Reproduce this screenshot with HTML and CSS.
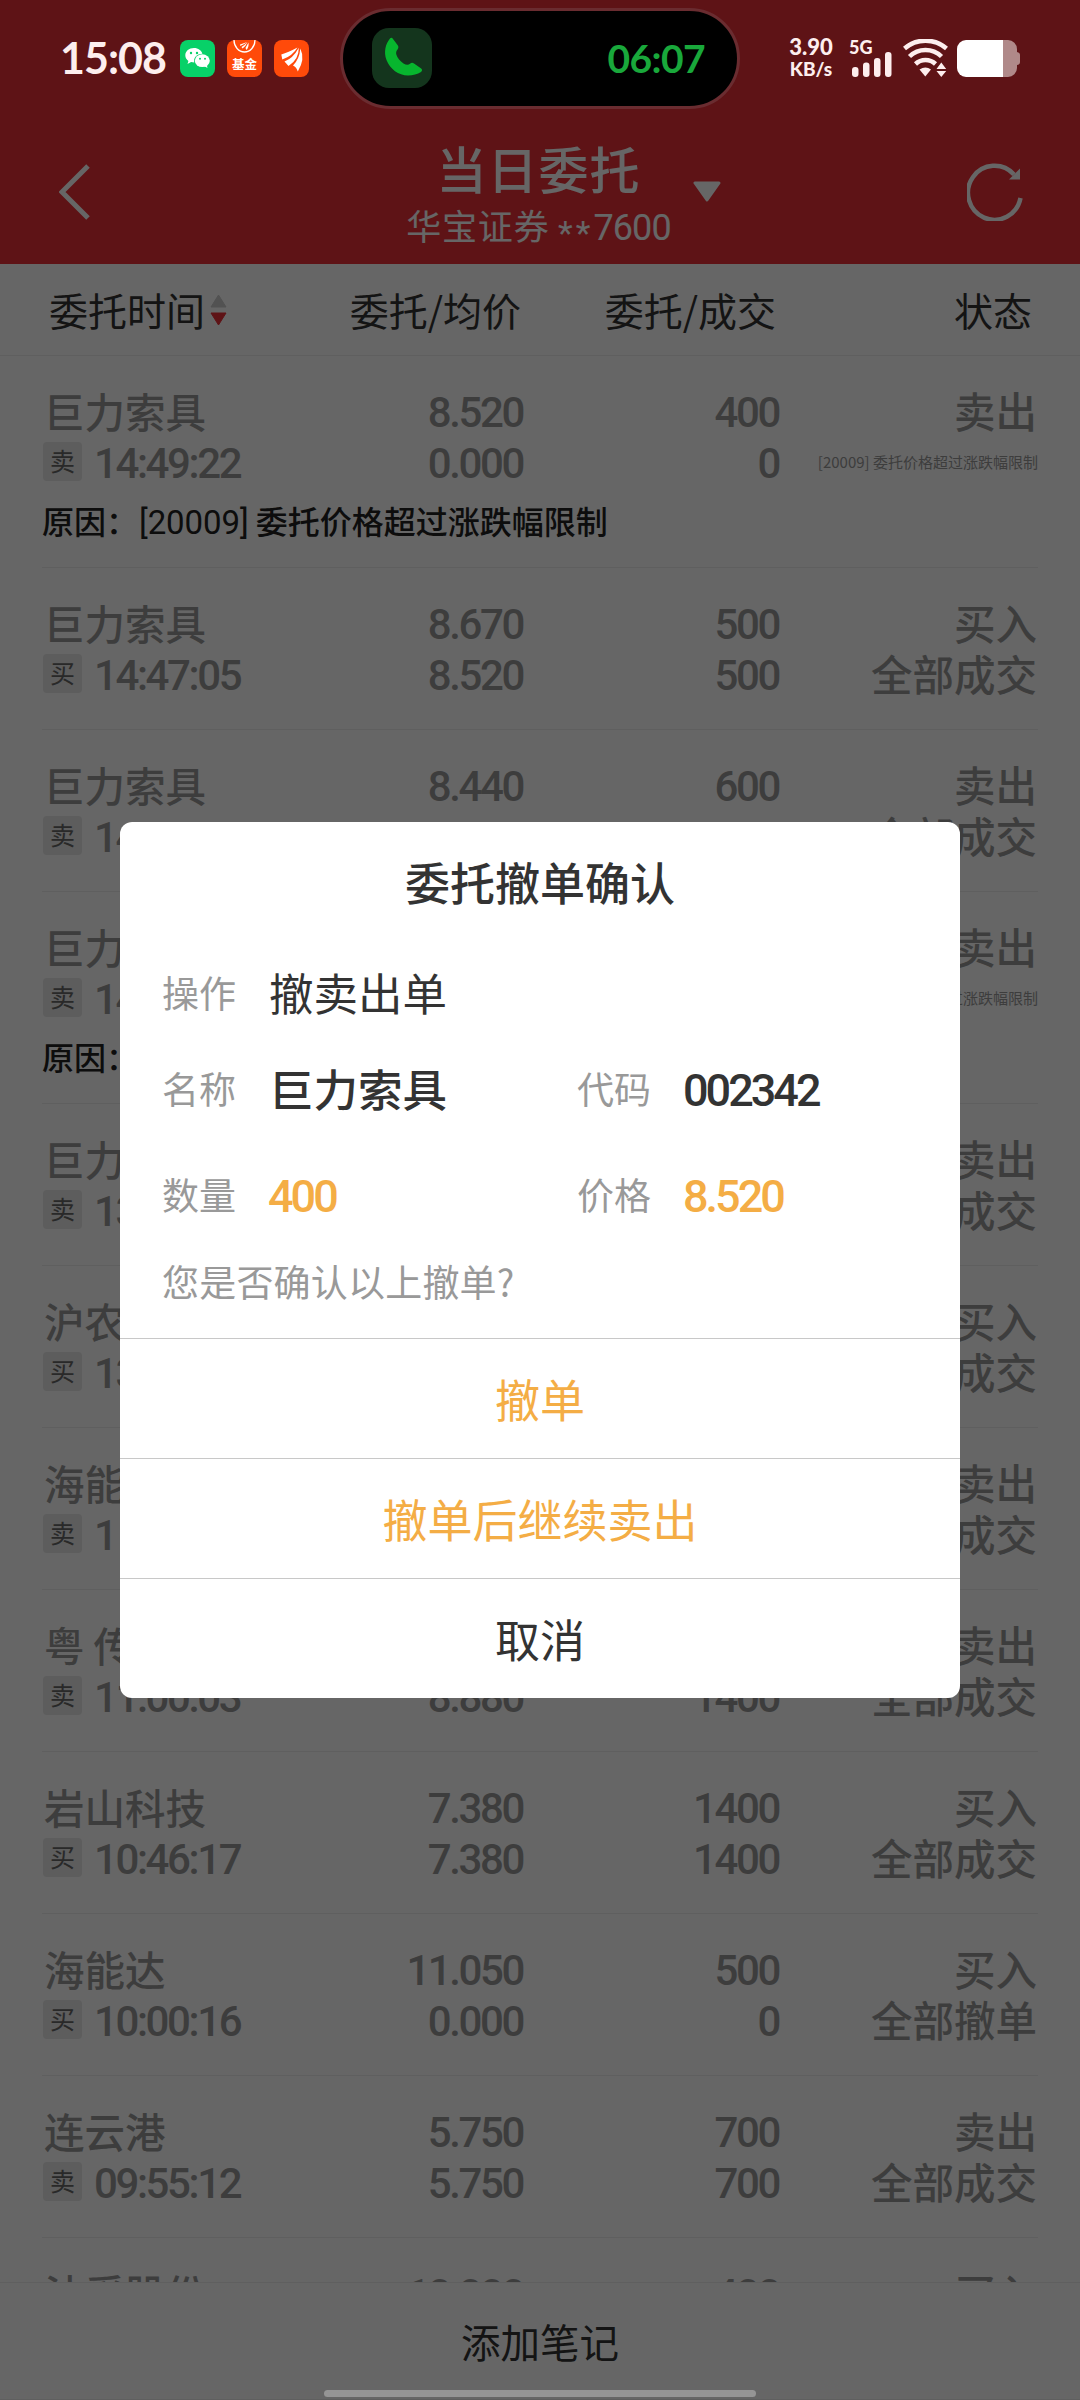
FILE: index.html
```html
<!DOCTYPE html>
<html lang="zh-CN">
<head>
<meta charset="utf-8">
<title>当日委托</title>
<link rel="stylesheet" href="styles.css">
</head>
<body>
<div class="screen">
  <div class="page">
    <header class="nav">
      <svg class="nav-back" width="32" height="58" viewBox="0 0 32 58"><path d="M29 3 3 29 29 55" fill="none" stroke="#fff" stroke-width="5"/></svg>
      <div class="nav-center">
        <h1 class="nav-title">当日委托</h1>
        <div class="nav-account">华宝证券 <span class="num"><span class="mask">**</span>7600</span></div>
      </div>
      <svg class="nav-caret" width="28" height="22" viewBox="0 0 28 22"><path d="M2 2H26L14 19Z" fill="#fff" stroke="#fff" stroke-width="3" stroke-linejoin="round"/></svg>
      <svg class="nav-refresh" width="58" height="60" viewBox="0 0 58 60"><path d="M47 13.500A26.500 27 0 1 0 53.500 37" fill="none" stroke="#fff" stroke-width="4.500"/><path d="M42 18.500 53 7.500V18.500Z" fill="#fff"/></svg>
    </header>

    <div class="thead grid">
      <div class="th th-time">委托时间<svg width="17" height="32" viewBox="0 0 17 32"><path d="M8.500 1 16 13H1Z" fill="#ccc" stroke="#ccc" stroke-linejoin="round"/><path d="M8.500 31 16 19H1Z" fill="#eb3039" stroke="#eb3039" stroke-linejoin="round"/></svg></div>
      <div class="th">委托/均价</div>
      <div class="th">委托/成交</div>
      <div class="th th-state">状态</div>
    </div>

    <main class="list">
      <section class="row row-reason">
        <div class="grid">
          <div class="name">巨力索具</div><div class="num">8.520</div><div class="num">400</div><div class="state">卖出</div>
          <div class="time"><span class="tag">卖</span><span class="num">14:49:22</span></div><div class="num">0.000</div><div class="num">0</div><div class="state-small">[20009] 委托价格超过涨跌幅限制</div>
        </div>
        <p class="reason">原因：<span class="code">[20009]</span> 委托价格超过涨跌幅限制</p>
      </section>
      <section class="row"><div class="grid">
        <div class="name">巨力索具</div><div class="num">8.670</div><div class="num">500</div><div class="state">买入</div>
        <div class="time"><span class="tag">买</span><span class="num">14:47:05</span></div><div class="num">8.520</div><div class="num">500</div><div class="state">全部成交</div>
      </div></section>
      <section class="row"><div class="grid">
        <div class="name">巨力索具</div><div class="num">8.440</div><div class="num">600</div><div class="state">卖出</div>
        <div class="time"><span class="tag">卖</span><span class="num">14</span></div><div></div><div></div><div class="state">全部成交</div>
      </div></section>
      <section class="row row-reason">
        <div class="grid">
          <div class="name">巨力</div><div></div><div></div><div class="state">卖出</div>
          <div class="time"><span class="tag">卖</span><span class="num">14</span></div><div></div><div></div><div class="state-small">过涨跌幅限制</div>
        </div>
        <p class="reason">原因：</p>
      </section>
      <section class="row"><div class="grid">
        <div class="name">巨力</div><div></div><div></div><div class="state">卖出</div>
        <div class="time"><span class="tag">卖</span><span class="num">13</span></div><div></div><div></div><div class="state">成交</div>
      </div></section>
      <section class="row"><div class="grid">
        <div class="name">沪农</div><div></div><div></div><div class="state">买入</div>
        <div class="time"><span class="tag">买</span><span class="num">13</span></div><div></div><div></div><div class="state">成交</div>
      </div></section>
      <section class="row"><div class="grid">
        <div class="name">海能</div><div></div><div></div><div class="state">卖出</div>
        <div class="time"><span class="tag">卖</span><span class="num">1</span></div><div></div><div></div><div class="state">成交</div>
      </div></section>
      <section class="row"><div class="grid">
        <div class="name">粤 传</div><div></div><div></div><div class="state">卖出</div>
        <div class="time"><span class="tag">卖</span><span class="num">11:00:03</span></div><div class="num">8.880</div><div class="num">1400</div><div class="state">全部成交</div>
      </div></section>
      <section class="row"><div class="grid">
        <div class="name">岩山科技</div><div class="num">7.380</div><div class="num">1400</div><div class="state">买入</div>
        <div class="time"><span class="tag">买</span><span class="num">10:46:17</span></div><div class="num">7.380</div><div class="num">1400</div><div class="state">全部成交</div>
      </div></section>
      <section class="row"><div class="grid">
        <div class="name">海能达</div><div class="num">11.050</div><div class="num">500</div><div class="state">买入</div>
        <div class="time"><span class="tag">买</span><span class="num">10:00:16</span></div><div class="num">0.000</div><div class="num">0</div><div class="state">全部撤单</div>
      </div></section>
      <section class="row"><div class="grid">
        <div class="name">连云港</div><div class="num">5.750</div><div class="num">700</div><div class="state">卖出</div>
        <div class="time"><span class="tag">卖</span><span class="num">09:55:12</span></div><div class="num">5.750</div><div class="num">700</div><div class="state">全部成交</div>
      </div></section>
      <section class="row"><div class="grid">
        <div class="name">法孚股份</div><div class="num">10.000</div><div class="num">400</div><div class="state">买入</div>
      </div></section>
    </main>

    <footer class="note">添加笔记</footer>
  </div>

  <div class="mask-layer">
    <div class="dialog">
      <h2 class="dialog-title">委托撤单确认</h2>
      <dl class="fields">
        <dt>操作</dt><dd class="wide">撤卖出单</dd>
        <dt>名称</dt><dd class="strong">巨力索具</dd><dt>代码</dt><dd class="digits">002342</dd>
        <dt>数量</dt><dd class="digits accent">400</dd><dt>价格</dt><dd class="digits accent">8.520</dd>
      </dl>
      <p class="question">您是否确认以上撤单?</p>
      <div class="action accent">撤单</div>
      <div class="action accent">撤单后继续卖出</div>
      <div class="action">取消</div>
    </div>
  </div>

  <div class="status-bar">
    <span class="clock">15:08</span>
    <span class="apps">
      <svg width="35" height="37" viewBox="0 0 35 37"><rect width="35" height="37" rx="8" fill="#07d168"/><path d="M14 8C9 8 5.300 11.200 5.300 15.300c0 2.300 1.200 4.300 3.100 5.600l-.9 3 3.600-1.900c1 .3 2 .4 3.200.4a7 7 0 0 1-.2-1.700c0-3.900 3.700-6.900 8.300-6.900C21.600 10.500 18.200 8 14 8Z" fill="#fff"/><ellipse cx="22.300" cy="20.700" rx="7.500" ry="6.400" fill="#fff"/><path d="m24 26 3.500 2-.8-3.500Z" fill="#fff"/><g fill="#07d168"><circle cx="11" cy="13" r="1.200"/><circle cx="17" cy="13" r="1.200"/><circle cx="20" cy="18.800" r="1"/><circle cx="25" cy="18.800" r="1"/></g></svg>
      <svg width="35" height="37" viewBox="0 0 35 37"><rect width="35" height="37" rx="8" fill="#ff4a0a"/><path d="M7 0a10.500 12 0 0 0 21 0" fill="none" stroke="#fff" stroke-width="1.300"/><g fill="#fff"><path d="M13 4.500Q17 3 20 2 17 4.500 13.300 6Z"/><path d="M14.500 7Q18 5 20.500 2 19 6 15.500 8.500Z"/><path d="M18.500 8Q20 5 21.500 2.500 22 7 19.500 10Z"/></g><text x="17.500" y="28.500" text-anchor="middle" class="fund">基金</text></svg>
      <svg width="35" height="37" viewBox="0 0 35 37"><rect width="35" height="37" rx="8" fill="#ff4a0a"/><g fill="#fff"><path d="M7.300 14.500Q14 12.500 23.500 7.500 18.500 16 8.300 19.500Z"/><path d="M10.500 21.500Q19 18.500 24.800 7.800 25 19.500 14.500 26Z"/><path d="M19 25.500Q25.500 19 26.300 8.500 31.500 19 23.800 31.500 22.500 27 19 25.500Z"/></g></svg>
    </span>
    <div class="island">
      <svg width="60" height="60" viewBox="0 0 60 60"><rect width="60" height="60" rx="17" fill="#14351d"/><path d="M18 10.500C13.500 16 11.500 24 14.500 32 18 41 26.500 47.500 36 47.500c5 0 9.500-1.500 13-3.500 1.500-1 1.300-2.700-.2-3.700L42 35.500c-1.500-1-2.700-.8-4 .3-1.500 1.400-4 1.300-6.500-.3-3.500-2.300-6-5.500-7-8.500-.7-2.200-.4-4 1-5.500 1-1.300 1.200-2.500.4-4L21 11c-.8-1.500-2-1.700-3-.5Z" fill="#07b52e"/></svg>
      <span class="call-time">06:07</span>
    </div>
    <div class="speed"><span>3.90</span><span class="unit">KB/s</span></div>
    <svg class="signal" width="44" height="40" viewBox="0 0 44 40"><text x="1" y="16" class="net">5G</text><g fill="#fdeeee"><rect x="4" y="29" width="6.500" height="10" rx="3"/><rect x="15" y="24.500" width="6.500" height="14.500" rx="3"/><rect x="26" y="20" width="6.500" height="19" rx="3"/><rect x="37" y="14" width="6.500" height="25" rx="3"/></g></svg>
    <svg class="wifi" width="45" height="38" viewBox="0 0 45 38"><g fill="none" stroke="#fdeeee" stroke-width="4.500"><path d="M1.500 9.500A32 32 0 0 1 43.500 9.500"/><path d="M6.500 17.500A23 23 0 0 1 38.500 17.500"/><path d="M12.500 25A14.500 14.500 0 0 1 32.500 25"/></g><path d="M16.500 30.500Q22.500 26.500 28 30.500L22.300 37.500Z" fill="#fdeeee"/><path d="M33.500 30 38.300 23.500 43.200 30ZM33.500 32H43.200L38.300 38Z" fill="#fdeeee"/></svg>
    <svg class="battery" width="64" height="37" viewBox="0 0 64 37"><path d="M46 0h5a9 9 0 0 1 9 9v3q3 .5 3 3v7q0 2.500-3 3v3a9 9 0 0 1-9 9h-5Z" fill="#b08989"/><path d="M9 0H46V37H9A9 9 0 0 1 0 28V9A9 9 0 0 1 9 0Z" fill="#fff"/></svg>
  </div>
  <div class="home-bar"></div>
</div>
</body>
</html>
```
FILE: styles.css
```css
* { box-sizing: border-box; }
body {
  margin: 0;
  font-family: "Noto Sans CJK SC", sans-serif;
  color: #333;
}
h1, h2, p, dl, dd { margin: 0; font-weight: 400; }
svg { display: block; flex: none; }

.screen {
  position: relative;
  width: 1080px;
  height: 2400px;
  overflow: hidden;
}
.page {
  height: 2400px;
  display: flex;
  flex-direction: column;
  background: #fff;
}

/* title bar */
.nav {
  flex: none;
  height: 264px;
  padding: 136px 55px 0 59px;
  display: grid;
  grid-template-columns: 32px 1fr 58px;
  background: #eb3039;
  position: relative;
  color: #fff;
}
.nav-back { margin-top: 27px; }
.nav-center { text-align: center; padding-left: 19px; }
.nav-title { font-size: 50px; line-height: 63px; letter-spacing: 1px; font-weight: 500; }
.nav-account { font-size: 35px; line-height: 51px; letter-spacing: .8px; white-space: nowrap; }
.nav-account .num { font-size: 36px; letter-spacing: -.9px; font-weight: 400; }
.nav-account .mask { vertical-align: -5px; font-size: 34px; letter-spacing: 3px; }
.nav-caret { position: absolute; left: 693px; top: 181px; }
.nav-refresh { margin-top: 25px; justify-self: end; }

.num { font-family: Roboto, sans-serif; }

/* table */
.grid {
  display: grid;
  grid-template-columns: 281px 200px 256px 259px;
}
.thead {
  flex: none;
  height: 92px;
  padding: 0 42px;
  border-bottom: 1px solid #eee;
}
.th { font-size: 39px; line-height: 91px; text-align: right; padding-right: 2px; white-space: nowrap; }
.th:nth-child(3) { padding-right: 3px; }
.th-time { display: flex; align-items: center; padding: 0 0 1px 7px; gap: 5px; }
.thead .th-state { padding-right: 6px; }

.list { flex: 1; overflow: hidden; padding: 0 42px; color: #999; }
.row { height: 162px; padding-top: 31px; border-bottom: 1px solid #eee; }
.row-reason { height: 212px; }
.row .grid { grid-auto-rows: 51px; font-size: 42px; white-space: nowrap; }
.row .num { line-height: 51px; letter-spacing: -2.400px; text-align: right; font-weight: 500; }
.name { font-size: 40.500px; line-height: 47px; padding-left: 2px; font-weight: 500; }
.state { font-size: 41.500px; line-height: 46px; text-align: right; font-weight: 500; padding-right: 1px; }
.state-small { font-size: 15px; line-height: 47px; text-align: right; }
.time { display: flex; align-items: center; padding-left: 1px; gap: 12px; }
.tag {
  width: 39px;
  height: 39px;
  margin-bottom: 4px;
  border-radius: 4px;
  background: #e8e8e8;
  color: #666;
  font-size: 25px;
  line-height: 36px;
  text-align: center;
}
.reason { font-size: 32px; line-height: 49px; padding-top: 7px; color: #222; font-weight: 500; white-space: nowrap; }
.reason .code { font-family: Roboto, sans-serif; font-size: 33px; font-weight: 400; letter-spacing: -.1px; padding-left: 1px; }

.note {
  flex: none;
  height: 118px;
  border-top: 1px solid #eee;
  border-bottom: 1px solid #eee;
  font-size: 39.500px;
  line-height: 115px;
  text-align: center;
}

/* dialog */
.mask-layer {
  position: absolute;
  inset: 0;
  padding: 822px 120px 0;
  background: rgba(0, 0, 0, .6);
}
.dialog { height: 876px; background: #fff; border-radius: 12px; overflow: hidden; }
.dialog-title { padding-top: 22px; font-size: 45px; line-height: 76px; text-align: center; font-weight: 500; }
.fields {
  margin-top: 28px;
  padding-left: 42px;
  display: grid;
  grid-template-columns: 107px 308px 107px 1fr;
  grid-template-rows: 87px 106px 106px;
  align-items: center;
}
.fields .wide { grid-column: span 3; }
.fields dt { font-size: 37px; line-height: 50px; color: #999; }
.fields dd { font-size: 44.500px; line-height: 60px; }
.fields .strong { font-weight: 500; }
.fields .digits { padding-top: 6px; font-family: Roboto, sans-serif; font-weight: 500; font-size: 45px; letter-spacing: -3px; margin-left: -1px; }
.question { height: 91px; padding: 9px 0 0 42px; font-size: 37px; line-height: 50px; letter-spacing: .2px; color: #999; }
.action { height: 120px; border-top: 1px solid #c8c8c8; font-size: 45px; line-height: 119px; text-align: center; }
.accent { color: #f4ad45; }

/* system overlay */
.status-bar { position: absolute; left: 0; top: 0; width: 1080px; height: 116px; display: flex; align-items: center; color: #fdeeee; font-family: Lato, sans-serif; }
.clock { width: 120px; margin-left: 60px; font-size: 43px; line-height: 56px; font-weight: 700; letter-spacing: -1px; }
.apps { display: flex; gap: 12px; }
.fund { font: 700 12.500px "Noto Sans CJK SC", sans-serif; fill: #fff; }
.island {
  width: 400px;
  height: 101px;
  margin-left: 31px;
  padding: 0 32px 0 29px;
  display: flex;
  align-items: center;
  justify-content: space-between;
  border: 3px solid #6a2c30;
  border-radius: 51px;
  background: #000;
}
.call-time { font-size: 39px; font-weight: 700; letter-spacing: -.6px; color: #19a83b; }
.speed { width: 48px; margin-left: 47px; display: flex; flex-direction: column; align-items: center; font-size: 22px; line-height: 22px; font-weight: 900; }
.unit { font-size: 19px; }
.signal { margin-left: 13px; }
.net { font: 900 18px Lato, sans-serif; fill: #fdeeee; }
.wifi { margin-left: 11px; }
.battery { margin-left: 9px; }
.home-bar { position: absolute; left: 324px; top: 2390px; width: 432px; height: 7px; border-radius: 4px; background: #959595; }
```
